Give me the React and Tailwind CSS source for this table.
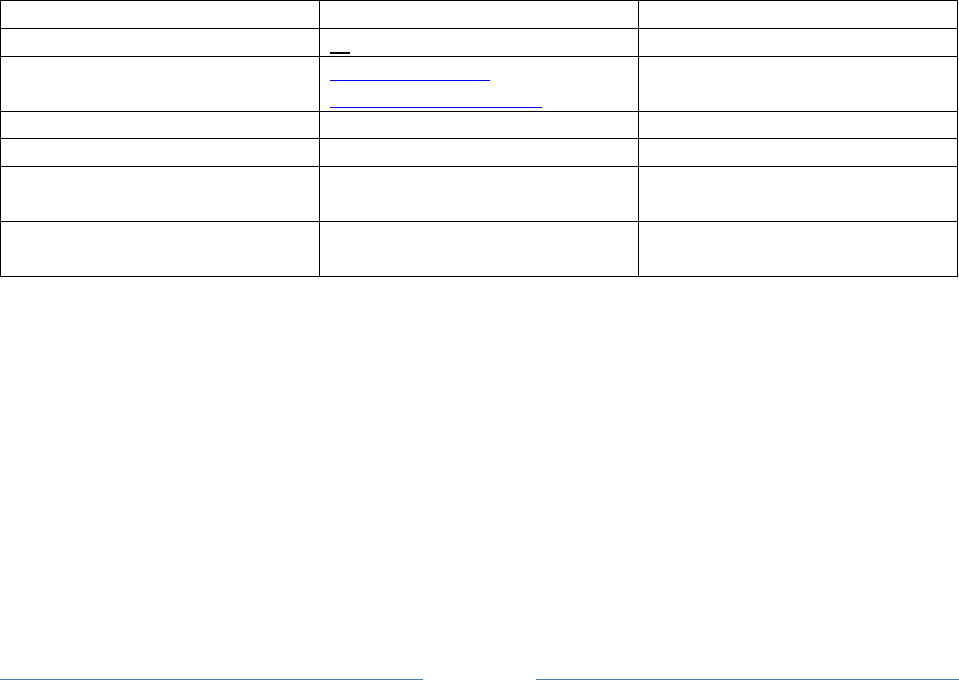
const rows = [
  { h: 'h-[28px]' },
  { h: 'h-[28px]', mid: 'rule' },
  { h: 'h-[55px]', mid: 'links' },
  { h: 'h-[27px]' },
  { h: 'h-[28px]' },
  { h: 'h-[55px]' },
  { h: 'h-[55px]' },
]

function MidCell({ kind }) {
  if (kind === 'rule') {
    return (
      <div className="pl-[10px] pt-[23px]">
        <a href="#" className="block w-[20px] border-b-2 border-black" />
      </div>
    )
  }
  if (kind === 'links') {
    return (
      <div className="pl-[10px] pt-[23px]">
        <a href="#" className="block w-[160px] border-b border-[#0000ee]" />
        <a href="#" className="block w-[212px] mt-[26px] border-b border-[#0000ee]" />
      </div>
    )
  }
  return null
}

export default function App() {
  return (
    <div className="h-[680px] flex flex-col justify-between bg-white font-['Liberation_Sans',Arial,sans-serif] text-sm text-black">
      <div className="w-[958px] border-t border-l border-black">
        {rows.map((r, i) => (
          <div key={i} className="grid grid-cols-[319px_319px_319px]">
            <div className={`${r.h} border-r border-b border-black`} />
            <div className={`${r.h} border-r border-b border-black`}>
              <MidCell kind={r.mid} />
            </div>
            <div className={`${r.h} border-r border-b border-black`} />
          </div>
        ))}
      </div>
      <div className="flex justify-between">
        <div className="w-[423px] border-t border-[#4a7ebb]" />
        <div className="w-[423px] border-t border-[#4a7ebb]" />
      </div>
    </div>
  )
}
